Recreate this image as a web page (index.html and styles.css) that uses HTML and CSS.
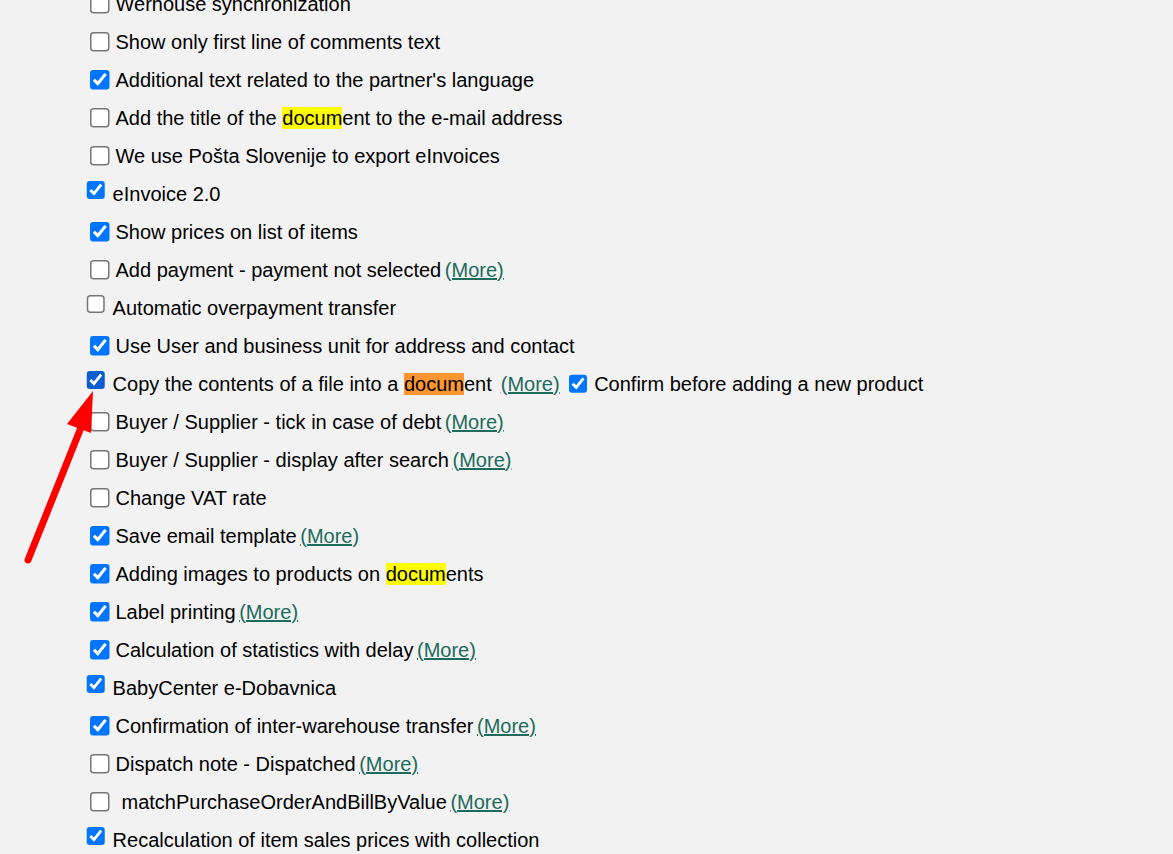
FILE: index.html
```html
<!DOCTYPE html>
<html lang="en">
<head>
<meta charset="utf-8">
<title>Settings</title>
<link rel="stylesheet" href="styles.css">
</head>
<body>
<div class="list">
  <div class="row"><input type="checkbox" class="cb"><span class="txt">Werhouse synchronization</span></div>
  <div class="row"><input type="checkbox" class="cb"><span class="txt">Show only first line of comments text</span></div>
  <div class="row"><input type="checkbox" class="cb" checked><span class="txt">Additional text related to the partner's language</span></div>
  <div class="row"><input type="checkbox" class="cb"><span class="txt">Add the title of the <mark class="hl">docum</mark>ent to the e-mail address</span></div>
  <div class="row"><input type="checkbox" class="cb"><span class="txt">We use Pošta Slovenije to export eInvoices</span></div>
  <div class="row alt"><input type="checkbox" class="cb" checked><span class="txt">eInvoice 2.0</span></div>
  <div class="row"><input type="checkbox" class="cb" checked><span class="txt">Show prices on list of items</span></div>
  <div class="row"><input type="checkbox" class="cb"><span class="txt">Add payment - payment not selected <a class="more" href="#">(More)</a></span></div>
  <div class="row alt"><input type="checkbox" class="cb"><span class="txt">Automatic overpayment transfer</span></div>
  <div class="row"><input type="checkbox" class="cb" checked><span class="txt">Use User and business unit for address and contact</span></div>
  <div class="row alt"><input type="checkbox" class="cb dark" checked><span class="txt">Copy the contents of a file into a <mark class="hl active">docum</mark>ent<a class="more wide" href="#">(More)</a></span><input type="checkbox" class="cb second" checked><span class="txt">Confirm before adding a new product</span></div>
  <div class="row"><input type="checkbox" class="cb"><span class="txt">Buyer / Supplier - tick in case of debt <a class="more" href="#">(More)</a></span></div>
  <div class="row"><input type="checkbox" class="cb"><span class="txt">Buyer / Supplier - display after search <a class="more" href="#">(More)</a></span></div>
  <div class="row"><input type="checkbox" class="cb"><span class="txt">Change VAT rate</span></div>
  <div class="row"><input type="checkbox" class="cb" checked><span class="txt">Save email template <a class="more" href="#">(More)</a></span></div>
  <div class="row"><input type="checkbox" class="cb" checked><span class="txt">Adding images to products on <mark class="hl">docum</mark>ents</span></div>
  <div class="row"><input type="checkbox" class="cb" checked><span class="txt">Label printing <a class="more" href="#">(More)</a></span></div>
  <div class="row"><input type="checkbox" class="cb" checked><span class="txt">Calculation of statistics with delay <a class="more" href="#">(More)</a></span></div>
  <div class="row alt"><input type="checkbox" class="cb" checked><span class="txt">BabyCenter e-Dobavnica</span></div>
  <div class="row"><input type="checkbox" class="cb" checked><span class="txt">Confirmation of inter-warehouse transfer <a class="more" href="#">(More)</a></span></div>
  <div class="row"><input type="checkbox" class="cb"><span class="txt">Dispatch note - Dispatched <a class="more" href="#">(More)</a></span></div>
  <div class="row"><input type="checkbox" class="cb"><span class="txt indent">matchPurchaseOrderAndBillByValue <a class="more" href="#">(More)</a></span></div>
  <div class="row alt"><input type="checkbox" class="cb" checked><span class="txt">Recalculation of item sales prices with collection</span></div>
</div>
<svg class="arrow" width="120" height="200" viewBox="0 0 120 200" aria-hidden="true">
  <line x1="80" y1="40" x2="28" y2="170" stroke="#ff0000" stroke-width="7" stroke-linecap="round"/>
  <polygon points="93,1 67,34 91,43" fill="#ff0000"/>
</svg>
</body>
</html>
```
FILE: styles.css
```css
html, body {
  margin: 0;
  padding: 0;
  background: #f2f2f2;
}
body {
  font-family: "Liberation Sans", Arial, sans-serif;
  font-size: 20px;
  color: #000;
  position: relative;
  min-height: 854px;
  overflow: hidden;
}
.list {
  display: flex;
  flex-direction: column;
  margin-top: -15px;
  padding-left: 90px;
}
.row {
  display: flex;
  align-items: center;
  height: 38px;
  white-space: nowrap;
}
.cb {
  zoom: 1.5;
  margin: 0 4px 0 0;
  flex: none;
}
.row.alt .cb {
  margin: 0 4.67px 4.5px -2.6px;
}
.cb.dark {
  accent-color: #0b5ecf;
}
.row.alt .cb.second {
  margin: 0 4px 0 6px;
}
.txt {
  line-height: 23px;
}
.indent {
  padding-left: 6px;
}
.hl {
  background: #ffff00;
  color: #000;
}
.hl.active {
  background: #ff9632;
}
.more {
  color: #1d6b5c;
  text-decoration: underline;
  margin-left: -2px;
}
.more.wide {
  margin-left: 9px;
}
.arrow {
  position: absolute;
  left: 0;
  top: 390px;
}
```
